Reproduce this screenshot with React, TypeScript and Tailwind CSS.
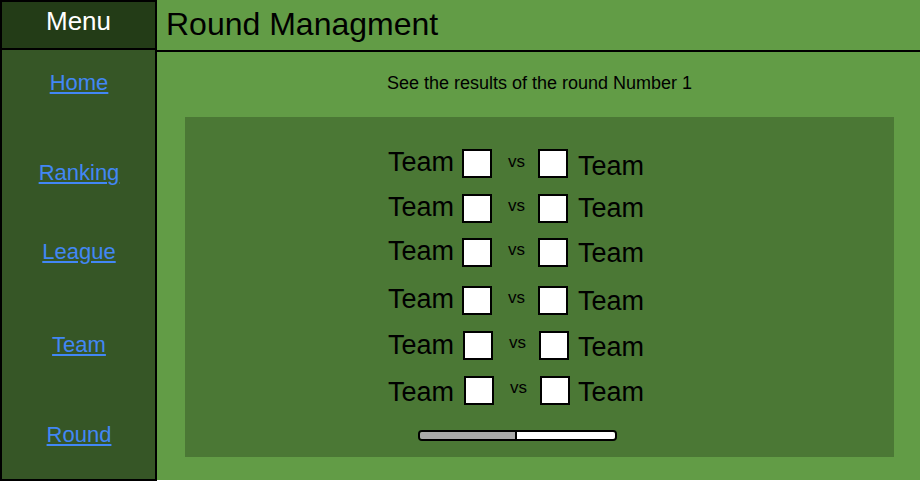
import React from "react";

const rows = [
  { rowMt: "mt-0", lt: "mt-0", box1: "ml-[8px]", vs: "mt-[4px]", rt: "mt-[4px]", rtMl: "ml-[10px]" },
  { rowMt: "mt-[16px]", lt: "mt-0", box1: "ml-[8px]", vs: "mt-[3px]", rt: "mt-[1px]", rtMl: "ml-[10px]" },
  { rowMt: "mt-[15px]", lt: "mt-0", box1: "ml-[8px]", vs: "mt-[3px]", rt: "mt-[2px]", rtMl: "ml-[10px]" },
  { rowMt: "mt-[19px]", lt: "mt-0", box1: "ml-[8px]", vs: "mt-[3px]", rt: "mt-[2px]", rtMl: "ml-[10px]" },
  { rowMt: "mt-[16px]", lt: "mt-[1px]", box1: "ml-[9px]", vs: "mt-[3px]", rt: "mt-[3px]", rtMl: "ml-[9px]" },
  { rowMt: "mt-[16px]", lt: "mt-[3px]", box1: "ml-[10px]", vs: "mt-[3px]", rt: "mt-[3px]", rtMl: "ml-[8px]" },
];

const links = [
  { label: "Home", mt: "mt-[22px]" },
  { label: "Ranking", mt: "mt-[68px]" },
  { label: "League", mt: "mt-[57px]" },
  { label: "Team", mt: "mt-[71px]" },
  { label: "Round", mt: "mt-[68px]" },
];

export default function App() {
  return (
    <div
      className="flex items-start w-[920px]"
      style={{ fontFamily: '"Liberation Sans", Arial, sans-serif' }}
    >
      {/* Sidebar */}
      <div className="w-[157px] h-[481px] shrink-0 border-2 border-black bg-[#365626] flex flex-col">
        <div className="h-[48px] border-b-2 border-black bg-[#233c17] pt-[6px] text-center">
          <div className="text-[26px] leading-none text-white">Menu</div>
        </div>
        <nav className="flex flex-col items-center pl-[1px]">
          {links.map((l) => (
            <a
              key={l.label}
              href="#"
              className={`${l.mt} block text-[22px] leading-none text-[#4287f5] underline`}
            >
              {l.label}
            </a>
          ))}
        </nav>
      </div>

      {/* Main */}
      <div className="flex-1 h-[480px] bg-[#629c46] flex flex-col">
        <div className="h-[52px] border-b-2 border-black pl-[9px] pt-[8px]">
          <h1 className="text-[32px] leading-none text-black">Round Managment</h1>
        </div>
        <p className="mt-[22px] pl-[2px] text-center text-[18px] leading-none text-black">
          See the results of the round Number 1
        </p>
        <div className="mt-[25px] ml-[28px] w-[709px] h-[340px] bg-[#4b7835] pt-[32px] pl-[203px]">
          {rows.map((r, i) => (
            <div key={i} className={`${r.rowMt} flex items-start h-[29px]`}>
              <span className={`${r.lt} text-[27px] leading-none text-black`}>Team</span>
              <div className={`${r.box1} w-[30px] h-[29px] border-2 border-black bg-white`} />
              <span className={`${r.vs} ml-[16px] text-[17px] leading-none text-black`}>vs</span>
              <div className="ml-[13px] w-[30px] h-[29px] border-2 border-black bg-white" />
              <span className={`${r.rt} ${r.rtMl} text-[27px] leading-none text-black`}>Team</span>
            </div>
          ))}
          <div className="mt-[25px] ml-[30px] w-[199px] h-[11px] border-2 border-black rounded-[4px] overflow-hidden flex">
            <div className="w-[97px] h-full bg-[#a9a9a9] border-r-2 border-black" />
            <div className="flex-1 h-full bg-white" />
          </div>
        </div>
      </div>
    </div>
  );
}
